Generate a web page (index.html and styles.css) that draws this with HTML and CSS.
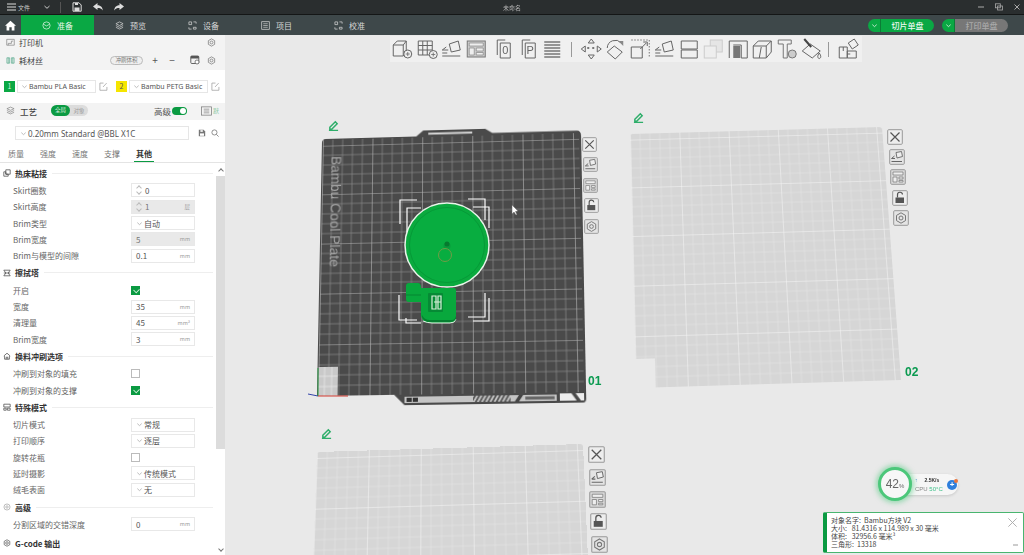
FILE: index.html
```html
<!DOCTYPE html>
<html lang="zh">
<head>
<meta charset="utf-8">
<title>Bambu Studio</title>
<link rel="stylesheet" href="styles.css">
</head>
<body>
<svg class="sprite" xmlns="http://www.w3.org/2000/svg">
  <defs>
    <symbol id="i-gear" viewBox="0 0 16 16"><path d="M8 1.5 13.6 4.7V11.3L8 14.5 2.4 11.3V4.7Z" fill="none" stroke="currentColor" stroke-width="1.3"/><circle cx="8" cy="8" r="2.6" fill="none" stroke="currentColor" stroke-width="1.3"/></symbol>
    <symbol id="i-x" viewBox="0 0 16 16"><rect x=".7" y=".7" width="14.6" height="14.6" rx="1" fill="#ededed" stroke="#999"/><path d="M3.5 3.5 12.5 12.5M12.5 3.5 3.5 12.5" stroke="#555" stroke-width="1.2"/></symbol>
    <symbol id="i-orient" viewBox="0 0 16 16"><rect x=".7" y=".7" width="14.6" height="14.6" rx="1" fill="#e4e4e4" stroke="#999"/><path d="M7 3.5 12.5 2.5 13.5 7.5 8 9Z" fill="#eee" stroke="#666" stroke-width=".9"/><path d="M2.500 12.500H13M2.500 9.500 5.500 7M2.500 9.500H6" stroke="#666" stroke-width="1" fill="none"/></symbol>
    <symbol id="i-layout" viewBox="0 0 16 16"><rect x=".7" y=".7" width="14.6" height="14.6" rx="1" fill="#d9d9d9" stroke="#999"/><path d="M3 3H13V6H3ZM3 8H7V13H3ZM9 8H13V10H9ZM9 11.500H13V13H9Z" fill="#eee" stroke="#777" stroke-width=".7"/></symbol>
    <symbol id="i-lock" viewBox="0 0 16 16"><rect x=".7" y=".7" width="14.6" height="14.6" rx="1" fill="#ededed" stroke="#999"/><rect x="3.500" y="7.500" width="8.500" height="5.500" fill="#555"/><path d="M5.500 7.500V5A2.500 2.500 0 0 1 10.500 4.500" fill="none" stroke="#555" stroke-width="1.200"/></symbol>
    <symbol id="i-nut" viewBox="0 0 16 16"><rect x=".7" y=".7" width="14.6" height="14.6" rx="1" fill="#e4e4e4" stroke="#999"/><path d="M8 2.800 12.500 5.400V10.600L8 13.200 3.500 10.600V5.400Z" fill="none" stroke="#777"/><circle cx="8" cy="8" r="2" fill="none" stroke="#777"/></symbol>
    <symbol id="i-pen" viewBox="0 0 12 12"><path d="M2 8 8 2 10 4 4 10H2ZM1 11.300H11" fill="none" stroke="#2eae6a" stroke-width="1.600"/></symbol>
    <symbol id="i-chev" viewBox="0 0 8 8"><path d="M1.500 3 4 5.300 6.500 3" fill="none" stroke="currentColor" stroke-width=".9"/></symbol>
    <symbol id="i-edit" viewBox="0 0 10 10"><path d="M8.800 5.500V9.200H1V1.200H5M4.500 5.500 8.500 1.200" fill="none" stroke="#9a9a9a" stroke-width=".8"/></symbol>
    <pattern id="grid-dark" width="50" height="50" patternUnits="userSpaceOnUse" x="0" y="6">
      <path d="M10 0V50M20 0V50M30 0V50M40 0V50M0 10H50M0 20H50M0 30H50M0 40H50" stroke="#8a8a8a" stroke-width=".7" fill="none"/>
      <path d="M0 0V50M0 0H50" stroke="#b5b5b5" stroke-width="1.200" fill="none"/>
    </pattern>
    <pattern id="grid-light" width="50" height="50" patternUnits="userSpaceOnUse" x="0" y="6">
      <path d="M10 0V50M20 0V50M30 0V50M40 0V50M0 10H50M0 20H50M0 30H50M0 40H50" stroke="#e8e8e8" stroke-width=".5" fill="none"/>
      <path d="M0 0V50M0 0H50" stroke="#f5f5f5" stroke-width="1" fill="none"/>
    </pattern>
    <pattern id="hatch" width="4" height="6" patternUnits="userSpaceOnUse" patternTransform="skewX(-30)">
      <rect width="2" height="6" fill="#555"/>
    </pattern>
  </defs>
</svg>

<div class="app">
  <header class="titlebar">
    <svg class="tb-burger" viewBox="0 0 9 8"><path d="M0 1H9M0 4H9M0 7H9" stroke="#ddd" stroke-width="1"/></svg>
    <span class="tb-file">文件</span>
    <svg class="tb-chev"><use href="#i-chev"/></svg>
    <span class="tb-sep"></span>
    <svg class="tb-icon tb-save" viewBox="0 0 10 10"><path d="M1 .8H7L9.200 3V9.200H1Z" fill="none" stroke="#ddd"/><rect x="2.500" y="5.500" width="5" height="3.500" fill="#ddd"/><rect x="3" y="1" width="3" height="2" fill="#ddd"/></svg>
    <svg class="tb-icon tb-undo" viewBox="0 0 10 10"><path d="M0 4.500 4.500 1V3.200C8 3.200 9.600 5.500 9.800 8.500 8.500 6.500 7 6 4.500 6V8Z" fill="#ddd"/></svg>
    <svg class="tb-icon tb-redo" viewBox="0 0 10 10"><path d="M10 4.500 5.500 1V3.200C2 3.200 .4 5.500 .2 8.500 1.500 6.500 3 6 5.500 6V8Z" fill="#ddd"/></svg>
    <span class="tb-title">未命名</span>
    <span class="tb-win">
      <svg viewBox="0 0 8 8"><path d="M1 4H7" stroke="#aaa"/></svg>
      <svg viewBox="0 0 8 8"><rect x=".5" y=".8" width="4.800" height="4" fill="none" stroke="#aaa" stroke-width=".8"/><rect x="2.600" y="3" width="4.800" height="4" fill="none" stroke="#aaa" stroke-width=".8"/></svg>
      <svg viewBox="0 0 8 8"><path d="M1.500 1.500 6.500 6.500M6.500 1.500 1.500 6.500" stroke="#aaa"/></svg>
    </span>
  </header>

  <nav class="tabbar">
    <span class="home"><svg viewBox="0 0 12 12"><path d="M6 .8 12 6.200H10.300V11.500H7.300V7.800H4.700V11.500H1.700V6.200H0Z" fill="#fff"/></svg></span>
    <a class="nav-tab active"><svg viewBox="0 0 10 10"><circle cx="5" cy="5" r="4" fill="none" stroke="currentColor" stroke-width=".8"/><path d="M1.500 3.500 5 5.500 8.500 3.500" fill="none" stroke="currentColor" stroke-width=".8"/></svg>准备</a>
    <a class="nav-tab"><svg viewBox="0 0 10 10"><path d="M5 1 9 3 5 5 1 3ZM1 5 5 7 9 5M1 7 5 9 9 7" fill="none" stroke="currentColor" stroke-width=".8"/></svg>预览</a>
    <a class="nav-tab"><svg viewBox="0 0 10 10"><path d="M1 1H4V4H1ZM6 1H9V3M9 7V9H6V7ZM1 7V9H4" fill="none" stroke="currentColor" stroke-width=".8"/></svg>设备</a>
    <a class="nav-tab"><svg viewBox="0 0 10 10"><rect x=".8" y=".8" width="8.400" height="8.400" fill="none" stroke="currentColor" stroke-width=".8"/><path d="M2.500 3H7.500M2.500 5H7.500M2.500 7H7.500" stroke="currentColor" stroke-width=".7"/></svg>项目</a>
    <a class="nav-tab"><svg viewBox="0 0 10 10"><path d="M1 1H4V4H1ZM6 1H9V3M9 7V9H6V7ZM1 7V9H4" fill="none" stroke="currentColor" stroke-width=".8"/></svg>校准</a>
    <span class="nav-actions">
      <span class="act act-slice"><i><svg><use href="#i-chev"/></svg></i><b>切片单盘</b></span>
      <span class="act act-print"><i><svg><use href="#i-chev"/></svg></i><b>打印单盘</b></span>
    </span>
  </nav>

  <main class="workspace">
    <aside class="sidebar">
      <div class="band band-printer">
        <svg class="band-ic" viewBox="0 0 10 10"><path d="M.8 1.500H9.200V8H.8ZM2.500 8V6H6V3.500H8" fill="none" stroke="#777" stroke-width=".7"/></svg>
        <span class="band-title">打印机</span>
        <span class="grow"></span>
        <svg class="band-gear"><use href="#i-gear"/></svg>
      </div>
      <div class="band band-fil">
        <svg class="band-ic" viewBox="0 0 10 10"><path d="M1 2H4V8H1ZM6 2H9V8H6ZM2.500 2V8M7.500 2V8" fill="none" stroke="#47a383" stroke-width=".7"/></svg>
        <span class="band-title">耗材丝</span>
        <span class="grow"></span>
        <span class="flush-pill">冲刷体积</span>
        <span class="pm">+</span>
        <span class="pm pm2">−</span>
        <svg class="band-save" viewBox="0 0 10 10"><rect x=".8" y="1" width="8" height="7.500" rx="1" fill="none" stroke="#555" stroke-width=".9"/><rect x=".8" y="1" width="8" height="2.500" fill="#555"/><circle cx="7" cy="7" r="2" fill="#fff" stroke="#555" stroke-width=".7"/></svg>
        <svg class="band-gear"><use href="#i-gear"/></svg>
      </div>
      <div class="filaments">
        <span class="swatch sw-green">1</span>
        <span class="select fil-select"><svg><use href="#i-chev"/></svg>Bambu PLA Basic</span>
        <svg class="fil-edit"><use href="#i-edit"/></svg>
        <span class="swatch sw-yellow">2</span>
        <span class="select fil-select"><svg><use href="#i-chev"/></svg>Bambu PETG Basic</span>
        <svg class="fil-edit"><use href="#i-edit"/></svg>
      </div>
      <div class="band band-proc">
        <svg class="band-ic" viewBox="0 0 10 10"><path d="M1 3 5 1.200 9 3 5 4.800ZM1 5 5 6.800 9 5M1 7 5 8.800 9 7" fill="none" stroke="#777" stroke-width=".7"/></svg>
        <span class="band-title proc-title">工艺</span>
        <span class="scope"><em>全局</em><span>对象</span></span>
        <span class="grow"></span>
        <span class="adv">高级</span>
        <span class="switch"></span>
        <svg class="list-ic" viewBox="0 0 12 10"><rect x=".5" y=".5" width="11" height="9" fill="none" stroke="#777" stroke-width=".8"/><path d="M3 3H9M3 5H9M3 7H9" stroke="#777" stroke-width=".7"/></svg>
        <span class="def">默</span>
      </div>
      <div class="preset">
        <span class="select preset-select"><svg><use href="#i-chev"/></svg>0.20mm Standard @BBL X1C</span>
        <svg class="preset-ic" viewBox="0 0 10 10"><path d="M1 1H7L9 3V9H1Z" fill="#777"/><rect x="3" y="1.500" width="3" height="2" fill="#fff"/><rect x="2.500" y="5.500" width="5" height="3" fill="#fff"/></svg>
        <svg class="preset-ic" viewBox="0 0 10 10"><circle cx="4.300" cy="4.300" r="3.200" fill="none" stroke="#777"/><path d="M6.700 6.700 9.500 9.500" stroke="#777"/></svg>
      </div>
      <div class="settabs">
        <span>质量</span><span>强度</span><span>速度</span><span>支撑</span><span class="on">其他</span>
      </div>
      <div class="settings">
        <div class="setlist">
          <div class="sec"><svg viewBox="0 0 10 10"><path d="M3.500 1H9V6.500H3.500ZM1 3.500H3.500V6.500H6.500V9H1Z" fill="none" stroke="#444" stroke-width=".9"/></svg><span>热床粘接</span></div>
          <div class="row"><label>Skirt圈数</label><span class="input"><i class="spin"></i><span>0</span></span></div>
          <div class="row"><label>Skirt高度</label><span class="input off"><i class="spin"></i><span>1</span><u>层</u></span></div>
          <div class="row"><label>Brim类型</label><span class="input sel"><svg><use href="#i-chev"/></svg><span>自动</span></span></div>
          <div class="row"><label>Brim宽度</label><span class="input off"><span>5</span><u>mm</u></span></div>
          <div class="row"><label>Brim与模型的间隙</label><span class="input"><span>0.1</span><u>mm</u></span></div>

          <div class="sec"><svg viewBox="0 0 10 10"><path d="M1 1.500H9L6.500 5 9 8.500H1L3.500 5Z M1 5H9" fill="none" stroke="#444" stroke-width=".9"/></svg><span>擦拭塔</span></div>
          <div class="row"><label>开启</label><span class="check on"></span></div>
          <div class="row"><label>宽度</label><span class="input"><span>35</span><u>mm</u></span></div>
          <div class="row"><label>清理量</label><span class="input"><span>45</span><u>mm³</u></span></div>
          <div class="row"><label>Brim宽度</label><span class="input"><span>3</span><u>mm</u></span></div>

          <div class="sec"><svg viewBox="0 0 10 10"><path d="M1 5 5 1.500 9 5M2 5V9H8V5M4 9V6.500H6V9" fill="none" stroke="#444" stroke-width=".9"/></svg><span>换料冲刷选项</span></div>
          <div class="row"><label>冲刷到对象的填充</label><span class="check"></span></div>
          <div class="row"><label>冲刷到对象的支撑</label><span class="check on"></span></div>

          <div class="sec"><svg viewBox="0 0 10 10"><path d="M1 1.500H9V5H1ZM1 6.500H4V9H1ZM5.500 6.500H9V9H5.500Z" fill="none" stroke="#444" stroke-width=".9"/></svg><span>特殊模式</span></div>
          <div class="row"><label>切片模式</label><span class="input sel"><svg><use href="#i-chev"/></svg><span>常规</span></span></div>
          <div class="row"><label>打印顺序</label><span class="input sel"><svg><use href="#i-chev"/></svg><span>逐层</span></span></div>
          <div class="row"><label>旋转花瓶</label><span class="check"></span></div>
          <div class="row"><label>延时摄影</label><span class="input sel"><svg><use href="#i-chev"/></svg><span>传统模式</span></span></div>
          <div class="row"><label>绒毛表面</label><span class="input sel"><svg><use href="#i-chev"/></svg><span>无</span></span></div>

          <div class="sec"><svg viewBox="0 0 10 10"><circle cx="5" cy="5" r="3.800" fill="none" stroke="#999" stroke-width=".8"/><circle cx="5" cy="5" r="1.500" fill="none" stroke="#999" stroke-width=".8"/></svg><span>高级</span></div>
          <div class="row"><label>分割区域的交错深度</label><span class="input"><span>0</span><u>mm</u></span></div>

          <div class="sec sec-last"><svg><use href="#i-gear"/></svg><span>G-code 输出</span></div>
        </div>
        <div class="scrollbar"><i class="sb-up"></i><i class="sb-thumb"></i><i class="grow"></i><i class="sb-down"></i></div>
      </div>
    </aside>

    <section class="canvas">
      <div class="toolbar">
        <svg class="tool" viewBox="0 0 24 24"><path d="M3 8 7 4H16V15L13 19H3ZM3 8H13V19M13 8 16 4" fill="none" stroke="#666" stroke-width="1"/><circle cx="17.500" cy="17" r="4" fill="#eee" stroke="#666"/><path d="M15.500 17H19.500M17.500 15V19" stroke="#666" stroke-width=".8"/></svg>
        <svg class="tool" viewBox="0 0 24 24"><path d="M3 4H17V18H3ZM3 8.500H17M3 13H17M7.500 4V18M12 4V18" fill="none" stroke="#666" stroke-width="1"/><circle cx="18" cy="17.500" r="4" fill="#eee" stroke="#666"/><path d="M16 17.500H20M18 15.500V19.500" stroke="#666" stroke-width=".8"/></svg>
        <svg class="tool" viewBox="0 0 24 24"><path d="M10 7 19 4 21 13 12 15Z" fill="none" stroke="#666"/><path d="M3 19H21M3 13 7 10M3 13H9M3 16H8" stroke="#666" fill="none"/></svg>
        <svg class="tool" viewBox="0 0 24 24"><rect x="3" y="4" width="18" height="16" fill="#ccc" stroke="#777"/><path d="M5 6H19V9H5ZM5 11H10V18H5ZM12 11H19V14H12ZM12 15.500H19V18H12Z" fill="#eee" stroke="#777" stroke-width=".6"/></svg>
        <svg class="tool tool-gap" viewBox="0 0 24 24"><path d="M6 18V3H14M9 6H19V21H9Z" fill="none" stroke="#666"/><text class="tool-tx" x="14" y="17" text-anchor="middle">0</text></svg>
        <svg class="tool" viewBox="0 0 24 24"><path d="M6 18V3H14M9 6H19V21H9Z" fill="none" stroke="#666"/><text class="tool-tx" x="14" y="17" text-anchor="middle">P</text></svg>
        <svg class="tool" viewBox="0 0 24 24"><path d="M4 5H20M4 8H20M4 11H20M4 14H20M4 17H20M4 20H20" stroke="#777" stroke-width="1.300"/></svg>
        <span class="tool-sep"></span>
        <svg class="tool" viewBox="0 0 24 24"><rect x="8" y="10" width="2" height="2" fill="#777"/><rect x="13" y="10" width="2" height="2" fill="#777"/><path d="M12 2 15 6H9ZM12 22 15 18H9ZM2 12 6 9V15ZM22 12 18 9V15Z" fill="none" stroke="#666"/></svg>
        <svg class="tool" viewBox="0 0 24 24"><path d="M11 9 19 15 12 22 4 15Z" fill="none" stroke="#666"/><path d="M4 11A8 8 0 0 1 18 6" fill="none" stroke="#666"/><path d="M15 4H20V9Z" fill="#888"/></svg>
        <svg class="tool" viewBox="0 0 24 24"><path d="M3 10H14V21H3Z" fill="none" stroke="#666"/><path d="M3 3H21V21" fill="none" stroke="#777" stroke-dasharray="1.500 1.500"/><path d="M12 12 18 6M15 5H19V9" fill="none" stroke="#666"/></svg>
        <svg class="tool" viewBox="0 0 24 24"><path d="M10 7 19 4 21 13 12 15Z" fill="none" stroke="#666"/><path d="M3 19H21M3 13 7 10M3 13H9M3 16H8" stroke="#666" fill="none"/></svg>
        <svg class="tool" viewBox="0 0 24 24"><path d="M4 4H20V12H4ZM4 13H20V21H4Z" fill="none" stroke="#666" stroke-width="1"/></svg>
        <svg class="tool" viewBox="0 0 24 24"><rect x="9" y="3" width="12" height="12" fill="#e5e5e5" stroke="#ccc"/><rect x="3" y="9" width="12" height="12" fill="#eee" stroke="#ccc"/></svg>
        <svg class="tool" viewBox="0 0 24 24"><path d="M3 21V4H21V21H15V8H7" fill="none" stroke="#666"/><rect x="7" y="9" width="7" height="12" fill="#777"/></svg>
        <svg class="tool" viewBox="0 0 24 24"><path d="M3 9 8 4H21V15L16 21H3ZM3 9H16V21M16 9 21 4M9 21 11 10" fill="none" stroke="#666"/></svg>
        <svg class="tool" viewBox="0 0 24 24"><path d="M3 3H16V7H12V21H8V7H3Z" fill="none" stroke="#777"/><circle cx="17" cy="17" r="4" fill="#ccc" stroke="#777"/></svg>
        <svg class="tool" viewBox="0 0 24 24"><path d="M11 7 21 14 13 21 3 14Z" fill="none" stroke="#666"/><path d="M5 2 12 10" stroke="#444" stroke-width="2"/><path d="M20 16C18 19 18 21 20 21.500 22 21 22 19 20 16Z" fill="none" stroke="#666"/></svg>
        <span class="tool-sep tool-sep2"></span>
        <svg class="tool tool-last" viewBox="0 0 24 24"><path d="M3 10H11V21H3ZM11 14H20V21H11ZM12 6 18 2 22 8 16 12Z" fill="none" stroke="#666"/><path d="M7 10V14M11 17H14" stroke="#666"/></svg>
      </div>

      <svg class="plate plate-1" viewBox="0 0 256 256">
        <path d="M3-1H94L101-7H163L170-2.500H254Q258-2.500 258 3V262Q258 266 255 266H84L74 256H-1V3Q-1-1 3-1Z" fill="#4a4a4a"/>
        <rect x="0" y="0" width="256" height="256" fill="url(#grid-dark)"/>
        <rect x="106" y="-4.500" width="44" height="2" fill="#d8d8d8"/>
        <text class="plate-name" x="9" y="17" transform="rotate(90 9 17)">Bambu Cool Plate</text>
        <path d="M0 228H19V256H0Z" fill="#c9c9c9"/>
        <path d="M6 228V256M13 228V256M0 237H19M0 247H19" stroke="#e9e9e9" stroke-width=".7"/>
        <rect x="84" y="258" width="146" height="6" fill="#c5c5c5"/>
        <rect x="86" y="259" width="5" height="4" fill="#333"/>
        <rect x="92" y="259" width="5" height="4" fill="#333"/>
        <rect x="150" y="258" width="36" height="6" fill="url(#hatch)"/>
        <path d="M190 264 194 258H198L194 264Z" fill="#444"/>
        <rect x="200" y="259.500" width="28" height="3" fill="#666"/>
        <path d="M233 257H244L249 264H233ZM248 257H256V264H253Z" fill="#ededed"/>
      </svg>

      <svg class="plate plate-2" viewBox="0 0 256 256">
        <path d="M3 0H253Q256 0 256 3V256H19V228H0V3Q0 0 3 0Z" fill="#d6d6d6"/>
        <path d="M3 0H253Q256 0 256 3V256H19V228H0V3Q0 0 3 0Z" fill="url(#grid-light)"/>
      </svg>

      <svg class="plate plate-3" viewBox="0 0 256 256">
        <path d="M3 0H253Q256 0 256 3V256H0V3Q0 0 3 0Z" fill="#d6d6d6"/>
        <path d="M3 0H253Q256 0 256 3V256H0V3Q0 0 3 0Z" fill="url(#grid-light)"/>
      </svg>

      <svg class="scene" viewBox="225 35 799 520">
        <path d="M308 394 318 396" stroke="#3344aa" stroke-width="1"/>
        <path d="M318 396V368" stroke="#2fa34a" stroke-width="1"/>
        <path d="M318 396H348" stroke="#d23a30" stroke-width="1"/>

        <g fill="none" stroke="#fff" stroke-width="1.200">
          <path d="M417 200H400V224M421 208H407V232M468 199H485V220M473 207H489V228"/>
          <path d="M399 295V320H417M406 318V323H421M485 293V317H468M489 298V321H473"/>
        </g>

        <circle cx="447" cy="245" r="42" fill="#0aaa3e" stroke="#e9f5ea" stroke-width="1.500"/>
        <circle cx="447" cy="245" r="37.500" fill="#08ad40" stroke="#069a38" stroke-width="1"/>
        <circle cx="447" cy="246" r="3.500" fill="#0a9a3b"/>
        <circle cx="447" cy="244" r="2.500" fill="#067a2e"/>
        <circle cx="445" cy="255" r="6.500" fill="none" stroke="#6f9c45" stroke-width="1"/>

        <path d="M406 286Q406 283 409 283H418Q421 283 421 288H454Q456 288 456 290V318Q456 323 450 323H429Q423 323 421 316V302H409Q406 302 406 299Z" fill="#08a83d"/>
        <path d="M423 321Q428 323 432 323H450Q455 323 456 319" fill="none" stroke="#eaf3ea" stroke-width="1"/>
        <path d="M422 315Q424 320 430 320H452Q455 320 456 316V319Q454 322 450 322H430Q424 322 422 317Z" fill="#067f31"/>
        <rect x="428" y="293" width="15" height="19" rx="1" fill="#068a35"/>
        <path d="M432 296H436V309H432ZM438 296H441V309H438ZM434 302H441" stroke="#d8efd9" stroke-width="1.200" fill="none"/>
        <path d="M406 295H421" stroke="#067f31" stroke-width=".8"/>

        <path d="M512 205V214L514 212 516 215 517 214.500 515.500 211.500 518 211Z" fill="#fff" stroke="#666" stroke-width=".5"/>
      </svg>

      <svg class="pen pen-1"><use href="#i-pen"/></svg>
      <svg class="pen pen-2"><use href="#i-pen"/></svg>
      <svg class="pen pen-3"><use href="#i-pen"/></svg>

      <span class="plate-no no-1">01</span>
      <span class="plate-no no-2">02</span>

      <svg class="pb pb-a1"><use href="#i-x"/></svg>
      <svg class="pb pb-a2"><use href="#i-orient"/></svg>
      <svg class="pb pb-a3"><use href="#i-layout"/></svg>
      <svg class="pb pb-a4"><use href="#i-lock"/></svg>
      <svg class="pb pb-a5"><use href="#i-nut"/></svg>

      <svg class="pb pb-b1"><use href="#i-x"/></svg>
      <svg class="pb pb-b2"><use href="#i-orient"/></svg>
      <svg class="pb pb-b3"><use href="#i-layout"/></svg>
      <svg class="pb pb-b4"><use href="#i-lock"/></svg>
      <svg class="pb pb-b5"><use href="#i-nut"/></svg>

      <svg class="pb pb-c1"><use href="#i-x"/></svg>
      <svg class="pb pb-c2"><use href="#i-orient"/></svg>
      <svg class="pb pb-c3"><use href="#i-layout"/></svg>
      <svg class="pb pb-c4"><use href="#i-lock"/></svg>
      <svg class="pb pb-c5"><use href="#i-nut"/></svg>

      <div class="monitor">
        <div class="mon-pill">
          <div class="mon-stats">
            <span class="mon-net"><em>↑</em><b>2.5K/s</b></span>
            <span class="mon-cpu">CPU <em>50°C</em></span>
          </div>
          <span class="mon-boost">+</span>
        </div>
        <div class="mon-dial">42<small>%</small></div>
      </div>

      <div class="info">
        <div>对象名字:&nbsp;&nbsp;Bambu方块 V2</div>
        <div>大小:&nbsp;&nbsp;&nbsp;81.4316 x 114.989 x 30 毫米</div>
        <div>体积:&nbsp;&nbsp;&nbsp;32956.6 毫米³</div>
        <div>三角形:&nbsp;&nbsp;13318</div>
        <svg class="info-x" viewBox="0 0 12 12"><path d="M1.500 1.500 10.500 10.500M10.500 1.500 1.500 10.500" stroke="#aaa" stroke-width="1"/></svg>
        <span class="info-min"></span>
      </div>
    </section>
  </main>
</div>
</body>
</html>
```

FILE: styles.css
```css
* { box-sizing: border-box; }
html, body { margin: 0; height: 100%; overflow: hidden; background: #e9e9e9; }
body { font-family: "Noto Sans CJK SC", "Noto Sans", sans-serif; font-size: 8px; color: #555; }
.sprite { position: absolute; width: 0; height: 0; }
.app { display: flex; flex-direction: column; width: 1024px; height: 555px; filter: blur(.5px); }
.grow { flex: 1; }

/* title bar */
.titlebar { position: relative; display: flex; align-items: center; height: 15px; background: #2a2e2f; border-bottom: 1px solid #141616; color: #ccc; flex: none; }
.tb-burger { width: 9px; height: 8px; margin-left: 7px; }
.tb-file { font-size: 6px; margin-left: 2px; width: 12px; }
.tb-chev { width: 8px; height: 8px; margin-left: 13px; color: #ddd; }
.tb-sep { width: 1px; height: 11px; background: #555; margin-left: 9px; }
.tb-icon { width: 10px; height: 10px; }
.tb-save { margin-left: 11px; }
.tb-undo { margin-left: 11px; }
.tb-redo { margin-left: 11px; }
.tb-title { position: absolute; left: 0; right: 0; text-align: center; font-size: 6px; color: #b5b5b5; }
.tb-win { margin-left: auto; display: flex; gap: 10px; margin-right: 3px; }
.tb-win svg { width: 8px; height: 8px; }

/* tab bar */
.tabbar { display: flex; align-items: stretch; height: 20px; background: #3e484a; flex: none; }
.home { width: 21px; display: flex; align-items: center; justify-content: center; }
.home svg { width: 11px; height: 11px; }
.nav-tab { width: 73px; display: flex; align-items: center; justify-content: center; gap: 6px; color: #d6d6d6; font-size: 8px; }
.nav-tab svg { width: 9px; height: 9px; }
.nav-tab.active { background: #0aa844; color: #e6f7ea; }
.nav-actions { margin-left: auto; display: flex; align-items: center; gap: 8px; margin-right: 16px; }
.act { display: flex; align-items: stretch; width: 66px; height: 13px; border-radius: 7px; overflow: hidden; font-size: 8px; }
.act i { width: 13px; display: flex; align-items: center; justify-content: center; background: #0aa844; border-right: 1px solid #0c7c36; color: #e8f7ec; }
.act i svg { width: 7px; height: 7px; }
.act b { flex: 1; text-align: center; font-weight: 500; line-height: 13px; }
.act-slice b { background: #0aa844; color: #eef9f1; }
.act-print b { background: #777; color: #aaa; }

/* workspace */
.workspace { display: flex; flex: 1; min-height: 0; }
.sidebar { width: 225px; flex: none; background: #fff; display: flex; flex-direction: column; overflow: hidden; }
.band { display: flex; align-items: center; background: #f3f3f3; padding: 0 6px 2px 6px; flex: none; }
.band-printer { height: 17px; }
.band-fil { height: 18px; }
.band-proc { height: 17px; padding-right: 4px; }
.band-ic { width: 9px; height: 9px; }
.band-title { font-size: 8px; margin-left: 4px; color: #444; }
.proc-title { font-size: 8.500px; font-weight: 500; margin-left: 5px; }
.band-gear { width: 9px; height: 9px; color: #777; margin-right: 3px; }
.flush-pill { width: 33px; height: 9px; border: 1px solid #bbb; border-radius: 5px; font-size: 5.500px; line-height: 7px; text-align: center; color: #777; background: #efefef; }
.pm { font-size: 10px; color: #555; margin-left: 8px; line-height: 10px; width: 8px; text-align: center; }
.pm2 { margin-left: 9px; }
.band-save { width: 10px; height: 10px; margin-left: 14px; margin-right: 7px; }
.filaments { display: flex; align-items: center; height: 33px; background: #fff; padding-left: 4px; flex: none; }
.swatch { width: 11px; height: 11px; font-size: 7px; text-align: center; line-height: 11px; flex: none; }
.sw-green { background: #0aa844; color: #d5f2dd; }
.sw-yellow { background: #f5e500; color: #555; }
.select { display: flex; align-items: center; background: #fff; border: 1px solid #e6e6e6; color: #555; font-family: "Noto Sans", sans-serif; white-space: nowrap; }
.select svg { width: 7px; height: 7px; color: #aaa; margin: 0 1px 0 3px; flex: none; }
.fil-select { width: 79px; height: 13px; margin-left: 2px; font-size: 7px; overflow: hidden; }
.fil-edit { width: 9px; height: 9px; margin-left: 3px; margin-right: 8px; flex: none; }
.fil-edit:last-child { margin-right: 0; }
.scope { display: flex; align-items: center; width: 37px; height: 11px; border-radius: 6px; background: #dcdcdc; margin-left: 14px; font-size: 5.500px; color: #999; }
.scope em { font-style: normal; width: 19px; height: 11px; line-height: 11px; background: #0a9a42; border-radius: 6px; text-align: center; color: #e3f4e8; }
.scope span { flex: 1; text-align: center; }
.adv { font-size: 8.500px; color: #555; margin-right: 1px; }
.switch { position: relative; width: 15px; height: 8px; border-radius: 4px; background: #0a9a42; }
.switch::after { content: ""; position: absolute; right: 1px; top: 1px; width: 6px; height: 6px; border-radius: 50%; background: #fff; }
.list-ic { width: 11px; height: 10px; margin-left: 14px; }
.def { width: 8px; font-size: 6px; color: #8ec9a5; margin-left: 1px; }
.preset { display: flex; align-items: center; height: 26px; padding-left: 15px; flex: none; }
.preset-select { width: 174px; height: 14px; font-size: 8px; }
.preset-select svg { margin-left: 4px; }
.preset-ic { width: 8px; height: 8px; margin-left: 5px; }
.preset-ic:first-of-type { margin-left: 9px; }
.settabs { display: flex; height: 17px; border-bottom: 1px solid #e4e4e4; flex: none; }
.settabs span { position: relative; width: 32px; text-align: center; line-height: 15px; font-size: 8px; color: #777; }
.settabs .on { color: #333; font-weight: 700; }
.settabs .on::after { content: ""; position: absolute; left: 6px; right: 6px; bottom: 0; height: 1px; background: #0a9a42; }
.settings { display: flex; flex: 1; min-height: 0; }
.setlist { flex: 1; padding-top: 1px; min-width: 0; padding-right: 3px; }
.sec { position: relative; display: flex; align-items: center; height: 18.300px; padding-left: 3px; color: #333; font-weight: 700; font-size: 8px; }
.sec svg { width: 8px; height: 8px; margin-right: 4px; color: #444; flex: none; }
.sec::after { content: ""; flex: 1; height: 1px; background: #eee; margin-left: 5px; }
.sec-last { height: 21px; }
.sec-last::after { display: none; }
.row { display: flex; align-items: center; height: 16.300px; padding-left: 13px; }
.row label { width: 118px; flex: none; color: #666; font-size: 8px; white-space: nowrap; }
.input { display: flex; align-items: center; width: 64px; height: 14px; background: #fff; border: 1px solid #e8e8e8; padding-left: 4px; color: #555; font-size: 8px; }
.input span { flex: 1; }
.input u { text-decoration: none; font-size: 5.500px; color: #999; margin-right: 4px; }
.input.off { background: #e9e9e9; color: #777; }
.input.sel svg { width: 7px; height: 7px; color: #aaa; margin-right: 1px; flex: none; }
.spin { position: relative; width: 5px; height: 10px; margin-right: 4px; flex: none; }
.spin::before, .spin::after { content: ""; position: absolute; left: 1px; width: 3px; height: 3px; border: solid #bbb; border-width: 1px 0 0 1px; }
.spin::before { top: 1px; transform: rotate(45deg); }
.spin::after { bottom: 1px; transform: rotate(225deg); }
.check { position: relative; width: 9px; height: 9px; border: 1px solid #bbb; background: #fff; }
.check.on { background: #0a9a42; border-color: #0a9a42; }
.check.on::after { content: ""; position: absolute; left: 1.500px; top: 0; width: 4px; height: 5px; border: solid #d8f2e0; border-width: 0 1px 1px 0; transform: rotate(45deg) scale(.85); }
.scrollbar { width: 9px; flex: none; display: flex; flex-direction: column; align-items: stretch; }
.scrollbar i { display: block; }
.sb-up, .sb-down { height: 13px; position: relative; }
.sb-up::after, .sb-down::after { content: ""; position: absolute; left: 2.500px; width: 3px; height: 3px; border: solid #777; border-width: 1px 0 0 1px; }
.sb-up::after { top: 6px; transform: rotate(45deg); }
.sb-down::after { top: 5px; transform: rotate(225deg); }
.sb-thumb { height: 273px; background: #dcdcdc; }

/* canvas */
.canvas { position: relative; flex: 1; min-width: 0; background: #e9e9e9; overflow: hidden; }
.toolbar { position: absolute; left: 165px; top: 1px; width: 472px; height: 26px; background: #f0f0f0; display: flex; align-items: center; z-index: 3; }
.tool { width: 24.500px; height: 24px; flex: none; }
.tool-gap { margin-left: 3px; }
.tool-tx { font: 11px "Liberation Sans", sans-serif; fill: #666; }
.tool-sep { width: 1px; height: 15px; background: #999; margin: 0 6.500px; flex: none; }
.tool-sep2 { margin: 0 7px 0 4px; }

.plate { position: absolute; left: 0; top: 0; width: 256px; height: 256px; overflow: visible; transform-origin: 0 0; }
.plate-1 { transform: matrix3d(.98318, -.0320, 0, -.0000475, -.03311, .94730, 0, -.000146, 0, 0, 1, 0, 98, 105, 0, 1); }
.plate-2 { transform: matrix3d(.99052, -.02648, 0, .00000936, -.05559, .92430, 0, -.0001923, 0, 0, 1, 0, 405, 99, 0, 1); }
.plate-3 { transform: matrix3d(1.03597, -.03478, 0, -.00000864, -.06350, .87156, 0, -.000298, 0, 0, 1, 0, 92, 417, 0, 1); }
.plate-name { font: 14px "Liberation Sans", sans-serif; fill: #a8a8a8; }
.scene { position: absolute; left: 0; top: 0; width: 799px; height: 520px; pointer-events: none; }

.pen { position: absolute; width: 11px; height: 11px; }
.pen-1 { left: 103px; top: 85px; }
.pen-2 { left: 408px; top: 77px; }
.pen-3 { left: 96px; top: 393px; }
.plate-no { position: absolute; font: 700 12px "Liberation Sans", sans-serif; color: #0a9a50; }
.no-1 { left: 363px; top: 339px; }
.no-2 { left: 680px; top: 330px; }

.pb { position: absolute; }
.pb-a1, .pb-a2, .pb-a3, .pb-a4, .pb-a5 { width: 15px; height: 15px; }
.pb-a1 { left: 357px; top: 102px; }
.pb-a2 { left: 358px; top: 122px; }
.pb-a3 { left: 358px; top: 143px; }
.pb-a4 { left: 359px; top: 163px; }
.pb-a5 { left: 359px; top: 184px; }
.pb-b1, .pb-b2, .pb-b3, .pb-b4, .pb-b5 { width: 16px; height: 16px; }
.pb-b1 { left: 662px; top: 94px; }
.pb-b2 { left: 664px; top: 114px; }
.pb-b3 { left: 665px; top: 134px; }
.pb-b4 { left: 667px; top: 155px; }
.pb-b5 { left: 668px; top: 175px; }
.pb-c1, .pb-c2, .pb-c3, .pb-c4, .pb-c5 { width: 17px; height: 17px; }
.pb-c1 { left: 363px; top: 411px; }
.pb-c2 { left: 364px; top: 434px; }
.pb-c3 { left: 364px; top: 456px; }
.pb-c4 { left: 365px; top: 478px; }
.pb-c5 { left: 366px; top: 501px; }

.monitor { position: absolute; left: 652px; top: 430px; width: 82px; height: 38px; }
.mon-pill { position: absolute; left: 17px; top: 9px; width: 64px; height: 21px; border-radius: 11px; background: #f6f6f6; box-shadow: 0 1px 3px rgba(0,0,0,.15); display: flex; align-items: center; padding-left: 21px; }
.mon-stats { display: flex; flex-direction: column; width: 32px; font-family: "Liberation Sans", sans-serif; font-size: 6px; line-height: 9px; }
.mon-net { display: flex; gap: 7px; }
.mon-net em { font-style: normal; color: #5b9bd5; font-size: 5px; }
.mon-net b { font-size: 5px; color: #333; }
.mon-cpu { color: #888; font-size: 6px; }
.mon-cpu em { font-style: normal; color: #3fc08a; }
.mon-boost { position: relative; width: 10px; height: 10px; border-radius: 50%; background: #2f7fdc; color: #fff; font: 700 8px/10px "Liberation Sans", sans-serif; text-align: center; }
.mon-boost::after { content: ""; position: absolute; right: -1px; top: -1px; width: 4px; height: 4px; border-radius: 50%; background: #e8743c; }
.mon-dial { position: absolute; left: 1px; top: 2px; width: 34px; height: 34px; border-radius: 50%; background: #f7f7f7; border: 3px solid #4cc77a; box-shadow: 0 0 5px 2px rgba(70,200,120,.5); color: #666; font: 12px/28px "Liberation Sans", sans-serif; text-align: center; }
.mon-dial small { font-size: 6px; }

.info { position: absolute; left: 598px; top: 477px; width: 201px; height: 41px; background: #fff; border: 1px solid #49b56f; border-left: 4px solid #0a9a42; border-radius: 2px; padding: 3px 0 0 4px; font-size: 7px; line-height: 8px; color: #444; white-space: nowrap; }
.info-x { position: absolute; right: 5px; top: 4px; width: 11px; height: 11px; }
.info-min { position: absolute; right: 5px; bottom: 6px; width: 5px; height: 2px; background: #ccc; }
```
